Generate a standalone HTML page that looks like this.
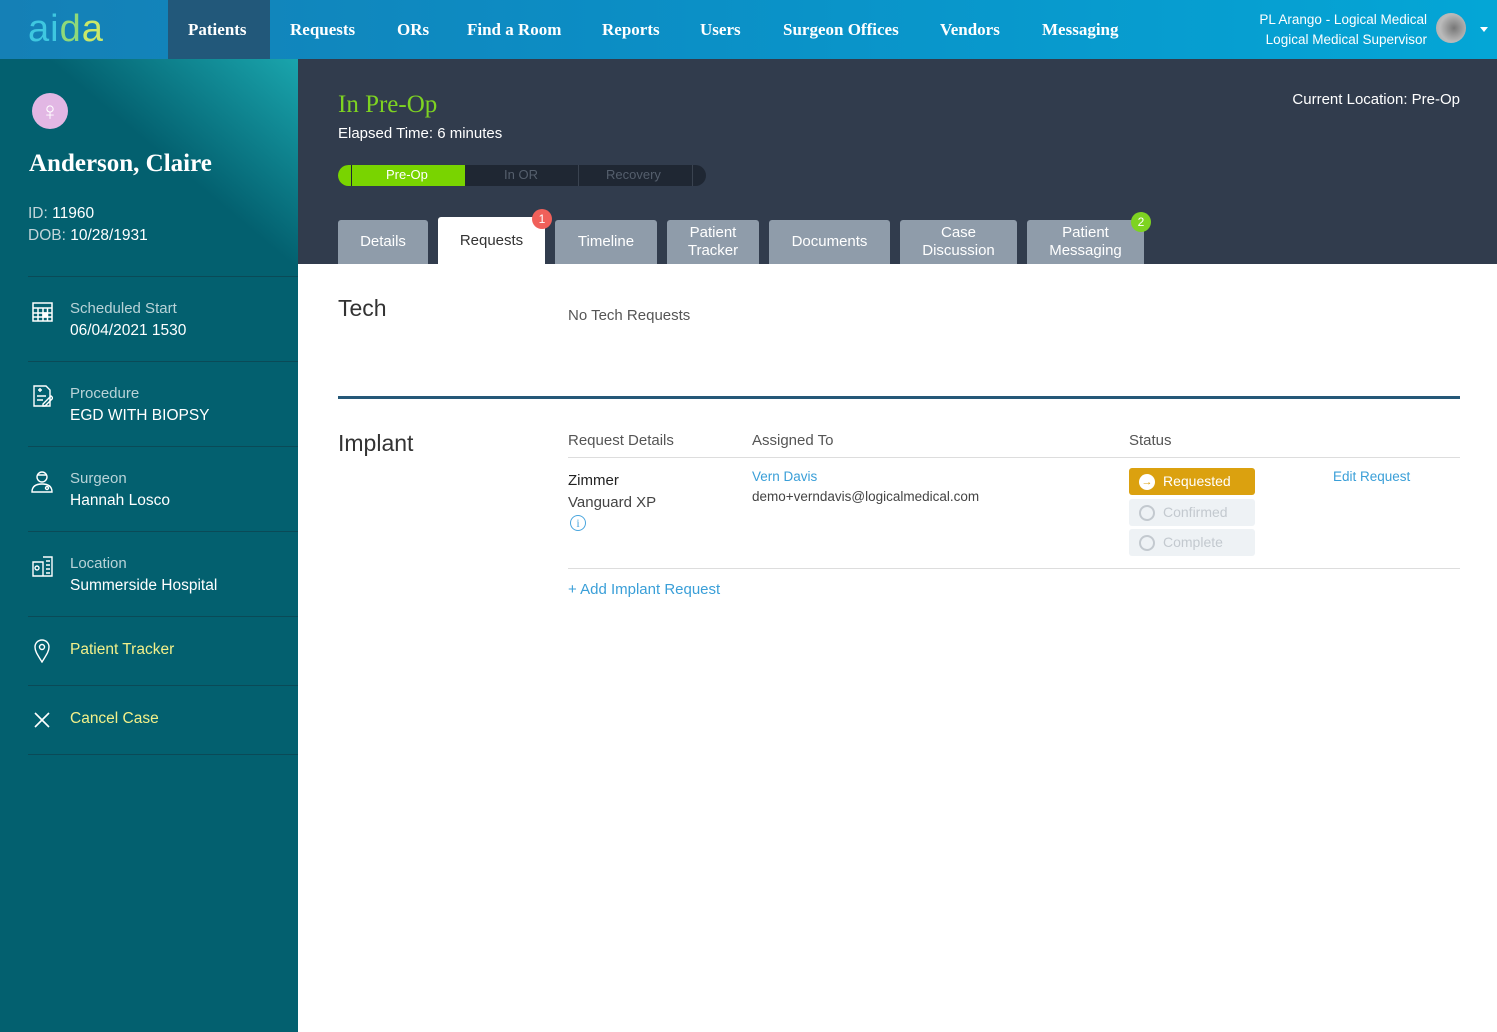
<!DOCTYPE html>
<html><head><meta charset="utf-8"><style>
*{box-sizing:border-box;margin:0;padding:0}
body{width:1497px;height:1032px;overflow:hidden;font-family:"Liberation Sans",sans-serif;background:#fff;position:relative}
.nav{position:absolute;left:0;top:0;width:1497px;height:59px;background:linear-gradient(90deg,#1580b6 0%,#0c8dc4 40%,#04a6d6 100%)}
.nav .logo{position:absolute;left:28px;top:8px;font-size:38px;letter-spacing:1px;font-weight:300}
.nav .item{position:absolute;top:0;height:59px;line-height:59px;color:#fff;font-family:"Liberation Serif",serif;font-size:17px;font-weight:bold}
.side{position:absolute;left:0;top:59px;width:298px;height:973px;background:#03606f}
.dark{position:absolute;left:298px;top:59px;width:1199px;height:205px;background:#313c4d}
.t{position:absolute;white-space:nowrap}
.row{position:absolute;left:28px;width:270px;border-top:1px solid #0a4a57}
.lbl{color:#b9d3d8;font-size:15px}
.val{color:#fff;font-size:15.5px}
.tab{position:absolute;top:220px;height:44px;background:#8f9caa;color:#fff;font-size:15px;text-align:center;border-radius:3px 3px 0 0;display:flex;align-items:center;justify-content:center;line-height:18px}
.badge{position:absolute;width:20px;height:20px;border-radius:50%;color:#fff;font-size:12px;text-align:center;line-height:20px}
.st{position:absolute;left:1129px;width:126px;height:27px;border-radius:3px;font-size:14px;line-height:27px;padding-left:34px}
.circ{position:absolute;left:10px;top:6px;width:16px;height:16px;border-radius:50%}
</style></head><body>
<div class="nav">
 <div class="logo"><span style="color:#3ec7e0">ai</span><span style="color:#8fd97a">d</span><span style="color:#c9e86a">a</span></div>
 <div style="position:absolute;left:168px;top:0;width:102px;height:59px;background:#22587a"></div>
 <div class="item" style="left:188px">Patients</div>
 <div class="item" style="left:290px">Requests</div>
 <div class="item" style="left:397px">ORs</div>
 <div class="item" style="left:467px">Find a Room</div>
 <div class="item" style="left:602px">Reports</div>
 <div class="item" style="left:700px">Users</div>
 <div class="item" style="left:783px">Surgeon Offices</div>
 <div class="item" style="left:940px">Vendors</div>
 <div class="item" style="left:1042px">Messaging</div>
 <div class="t" style="right:70px;top:10px;color:#fff;font-size:13.5px;text-align:right;line-height:20px">PL Arango - Logical Medical<br>Logical Medical Supervisor</div>
 <div style="position:absolute;left:1436px;top:13px;width:30px;height:30px;border-radius:50%;background:radial-gradient(circle at 60% 50%,#777,#bbb 60%,#aaa)"></div>
 <div style="position:absolute;left:1480px;top:27px;border:4px solid transparent;border-top:5px solid #fff"></div>
</div>
<div class="side"></div>
<div style="position:absolute;left:0;top:59px;width:298px;height:217px;background:linear-gradient(220deg,#1aa5ad 0%,rgba(3,96,111,0) 45%)"></div>
<div style="position:absolute;left:32px;top:93px;width:36px;height:36px;border-radius:50%;background:#e2b7e4;color:#fff;text-align:center;font-size:26px;line-height:36px">♀</div>
<div class="t" style="left:29px;top:150px;color:#fff;font-family:'Liberation Serif',serif;font-size:25px;font-weight:bold">Anderson, Claire</div>
<div class="t" style="left:28px;top:203px;font-size:15.5px;line-height:22px;color:#c3d5da">ID: <span style="color:#fff">11960</span><br>DOB: <span style="color:#fff">10/28/1931</span></div>
<div class="row" style="top:276px"></div>
<div class="row" style="top:361px"></div>
<div class="row" style="top:446px"></div>
<div class="row" style="top:531px"></div>
<div class="row" style="top:616px"></div>
<div class="row" style="top:685px"></div>
<div class="row" style="top:754px"></div>
<svg style="position:absolute;left:32px;top:301px" width="21" height="21" fill="none" stroke="#fff" stroke-width="1.5"><rect x="1" y="2" width="19" height="18"/><path d="M1 7h19M1 12h19M1 16h19M6 7v13M11 7v13M15.5 7v13"/><rect x="11" y="12" width="4" height="4" fill="#fff"/></svg>
<div class="t" style="left:70px;top:298px;line-height:22px"><span class="lbl">Scheduled Start</span><br><span class="val">06/04/2021 1530</span></div>
<svg style="position:absolute;left:33px;top:385px" width="20" height="22" fill="none" stroke="#fff" stroke-width="1.4"><path d="M1 1h12l4 4v16H1z"/><path d="M5 5h4M7 3v4M4 11h9M4 15h6"/><path d="M10 19l8-8 2 2-8 8h-2z"/></svg>
<div class="t" style="left:70px;top:383px;line-height:22px"><span class="lbl">Procedure</span><br><span class="val">EGD WITH BIOPSY</span></div>
<svg style="position:absolute;left:31px;top:469px" width="22" height="24" fill="none" stroke="#fff" stroke-width="1.4"><circle cx="11" cy="8" r="5"/><path d="M6 6h10M1 23c0-6 4-8 10-8s10 2 10 8z"/><circle cx="16" cy="19" r="1.5"/></svg>
<div class="t" style="left:70px;top:468px;line-height:22px"><span class="lbl">Surgeon</span><br><span class="val">Hannah Losco</span></div>
<svg style="position:absolute;left:32px;top:554px" width="22" height="23" fill="none" stroke="#fff" stroke-width="1.4"><path d="M1 8h10v14H1zM11 3h9v19h-9"/><circle cx="5" cy="14" r="2"/><path d="M14 7h4M14 11h4M14 15h4M14 19h4"/></svg>
<div class="t" style="left:70px;top:553px;line-height:22px"><span class="lbl">Location</span><br><span class="val">Summerside Hospital</span></div>
<svg style="position:absolute;left:34px;top:639px" width="16" height="24" fill="none" stroke="#fff" stroke-width="1.4"><path d="M8 23C3 15 1 12 1 8a7 7 0 0114 0c0 4-2 7-7 15z"/><circle cx="8" cy="8" r="2.5"/></svg>
<div class="t" style="left:70px;top:641px;color:#f2f08a;font-size:15.5px">Patient Tracker</div>
<svg style="position:absolute;left:34px;top:712px" width="16" height="16" stroke="#fff" stroke-width="1.6"><path d="M1 1l14 14M15 1L1 15"/></svg>
<div class="t" style="left:70px;top:710px;color:#f2f08a;font-size:15.5px">Cancel Case</div>

<div class="dark"></div>
<div class="t" style="left:338px;top:91px;color:#7ed321;font-family:'Liberation Serif',serif;font-size:25px">In Pre-Op</div>
<div class="t" style="left:338px;top:125px;color:#fff;font-size:15px">Elapsed Time: 6 minutes</div>
<div class="t" style="right:37px;top:91px;color:#fff;font-size:15px">Current Location: Pre-Op</div>
<div style="position:absolute;left:338px;top:165px;width:368px;height:21px;border-radius:11px;background:#1f2733;overflow:hidden">
 <div style="position:absolute;left:0;top:0;width:127px;height:21px;background:#79d400"></div>
 <div style="position:absolute;left:13px;top:0;width:1px;height:21px;background:#1f2733"></div>
 <div style="position:absolute;left:240px;top:0;width:1px;height:21px;background:#3a4350"></div>
 <div style="position:absolute;left:354px;top:0;width:1px;height:21px;background:#3a4350"></div>
 <div class="t" style="left:48px;top:2px;color:#fff;font-size:13px">Pre-Op</div>
 <div class="t" style="left:166px;top:2px;color:#555f6d;font-size:13px">In OR</div>
 <div class="t" style="left:268px;top:2px;color:#555f6d;font-size:13px">Recovery</div>
</div>
<div class="tab" style="left:338px;width:90px">Details</div>
<div class="tab" style="left:438px;width:107px;top:217px;height:47px;background:#fff;color:#333">Requests</div>
<div class="badge" style="left:532px;top:209px;background:#f0605a">1</div>
<div class="tab" style="left:555px;width:102px">Timeline</div>
<div class="tab" style="left:667px;width:92px">Patient<br>Tracker</div>
<div class="tab" style="left:769px;width:121px">Documents</div>
<div class="tab" style="left:900px;width:117px">Case<br>Discussion</div>
<div class="tab" style="left:1027px;width:117px">Patient<br>Messaging</div>
<div class="badge" style="left:1131px;top:212px;background:#7ed321">2</div>

<div class="t" style="left:338px;top:295px;color:#333;font-size:23px">Tech</div>
<div class="t" style="left:568px;top:307px;color:#555;font-size:15px">No Tech Requests</div>
<div style="position:absolute;left:338px;top:396px;width:1122px;height:3px;background:#255878"></div>
<div class="t" style="left:338px;top:430px;color:#333;font-size:23px">Implant</div>
<div class="t" style="left:568px;top:432px;color:#555;font-size:15px">Request Details</div>
<div class="t" style="left:752px;top:432px;color:#555;font-size:15px">Assigned To</div>
<div class="t" style="left:1129px;top:432px;color:#555;font-size:15px">Status</div>
<div style="position:absolute;left:568px;top:457px;width:892px;height:1px;background:#ddd"></div>
<div class="t" style="left:568px;top:470px;color:#222;font-size:15px;line-height:22px">Zimmer<br><span style="color:#444">Vanguard XP</span></div>
<div style="position:absolute;left:570px;top:515px;width:16px;height:16px;border:1px solid #4aa6de;border-radius:50%;color:#4aa6de;font-size:12px;text-align:center;line-height:14px;font-family:'Liberation Serif',serif">i</div>
<div class="t" style="left:752px;top:469px;color:#3a9fd8;font-size:13.5px">Vern Davis</div>
<div class="t" style="left:752px;top:489px;color:#444;font-size:13.5px">demo+verndavis@logicalmedical.com</div>
<div class="st" style="top:468px;background:#dba10f;color:#fff"><div class="circ" style="background:#fff;color:#dba10f;font-size:11px;line-height:16px;text-align:center">→</div>Requested</div>
<div class="st" style="top:499px;background:#eef2f5;color:#c3c9cf"><div class="circ" style="border:2px solid #c3c9cf;top:6px"></div>Confirmed</div>
<div class="st" style="top:529px;background:#eef2f5;color:#c3c9cf"><div class="circ" style="border:2px solid #c3c9cf;top:6px"></div>Complete</div>
<div class="t" style="left:1333px;top:469px;color:#3a9fd8;font-size:13.5px">Edit Request</div>
<div style="position:absolute;left:568px;top:568px;width:892px;height:1px;background:#ddd"></div>
<div class="t" style="left:568px;top:581px;color:#3a9fd8;font-size:15px">+ Add Implant Request</div>
</body></html>
